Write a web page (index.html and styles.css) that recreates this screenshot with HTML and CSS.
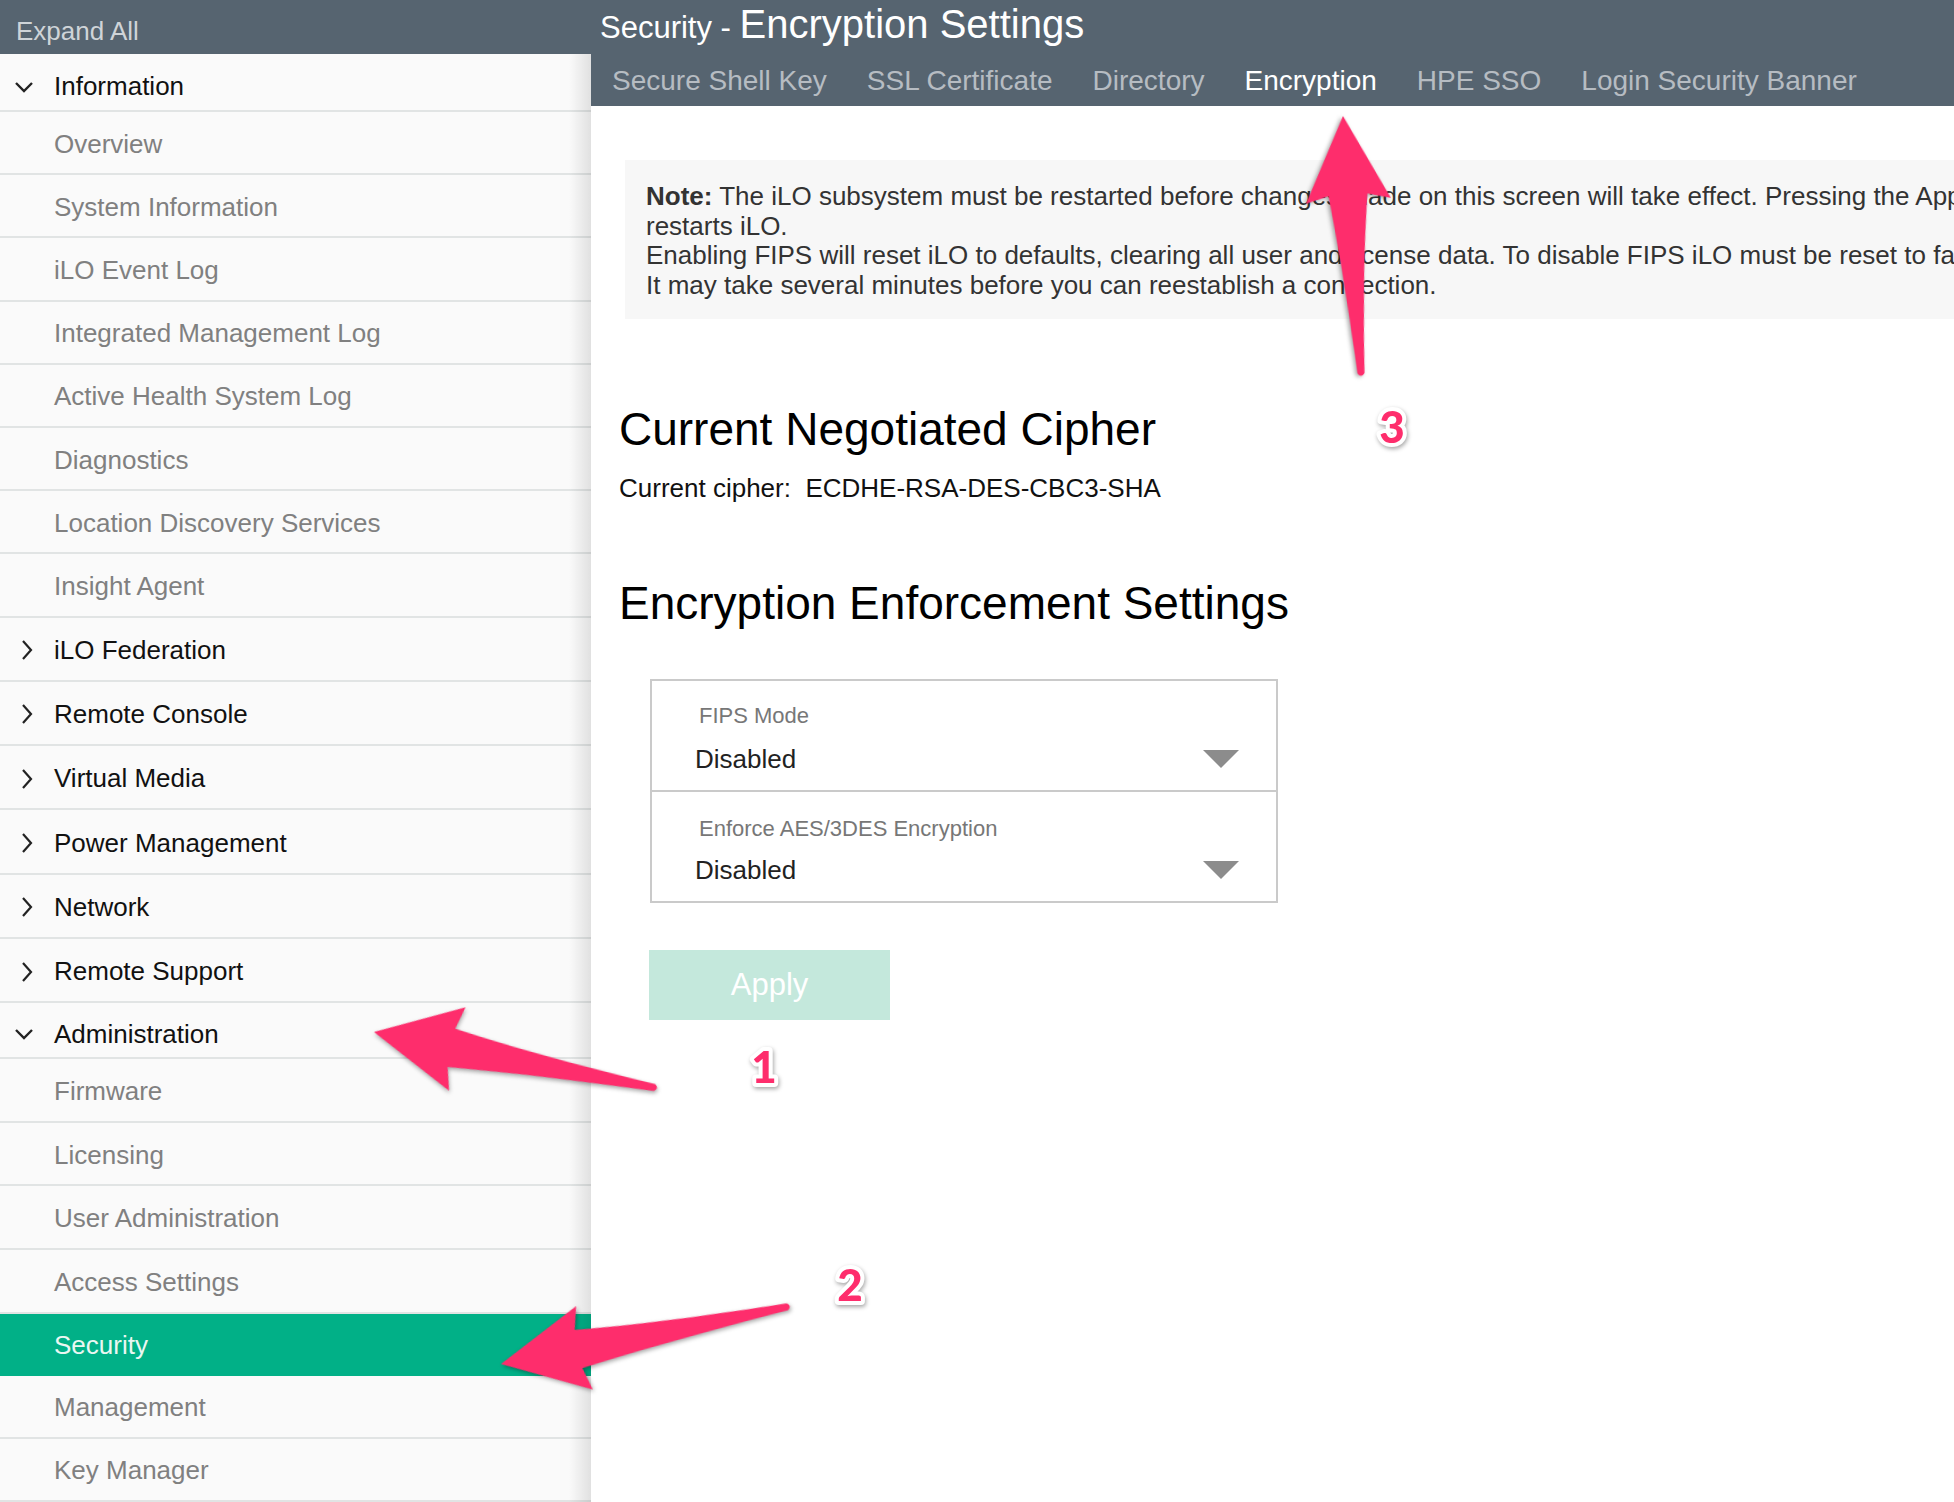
FILE: index.html
```html
<!DOCTYPE html>
<html lang="en">
<head>
<meta charset="utf-8">
<title>Security - Encryption Settings</title>
<link rel="stylesheet" href="styles.css">
</head>
<body>
<div class="page">
  <aside class="sidebar">
    <div class="expand">Expand All</div>
    <ul class="nav">
      <li class="item grp grp-open"><span class="chev"><svg width="20" height="12" viewBox="0 0 20 12"><polyline points="2,2 10,10 18,2" fill="none" stroke="#222" stroke-width="2.4"/></svg></span>Information</li>
      <li class="item sub">Overview</li>
      <li class="item sub">System Information</li>
      <li class="item sub">iLO Event Log</li>
      <li class="item sub">Integrated Management Log</li>
      <li class="item sub">Active Health System Log</li>
      <li class="item sub">Diagnostics</li>
      <li class="item sub">Location Discovery Services</li>
      <li class="item sub">Insight Agent</li>
      <li class="item grp grp-closed"><span class="chev"><svg width="12" height="22" viewBox="0 0 12 22"><polyline points="2,2 10,11 2,20" fill="none" stroke="#222" stroke-width="2.2"/></svg></span>iLO Federation</li>
      <li class="item grp grp-closed"><span class="chev"><svg width="12" height="22" viewBox="0 0 12 22"><polyline points="2,2 10,11 2,20" fill="none" stroke="#222" stroke-width="2.2"/></svg></span>Remote Console</li>
      <li class="item grp grp-closed"><span class="chev"><svg width="12" height="22" viewBox="0 0 12 22"><polyline points="2,2 10,11 2,20" fill="none" stroke="#222" stroke-width="2.2"/></svg></span>Virtual Media</li>
      <li class="item grp grp-closed"><span class="chev"><svg width="12" height="22" viewBox="0 0 12 22"><polyline points="2,2 10,11 2,20" fill="none" stroke="#222" stroke-width="2.2"/></svg></span>Power Management</li>
      <li class="item grp grp-closed"><span class="chev"><svg width="12" height="22" viewBox="0 0 12 22"><polyline points="2,2 10,11 2,20" fill="none" stroke="#222" stroke-width="2.2"/></svg></span>Network</li>
      <li class="item grp grp-closed"><span class="chev"><svg width="12" height="22" viewBox="0 0 12 22"><polyline points="2,2 10,11 2,20" fill="none" stroke="#222" stroke-width="2.2"/></svg></span>Remote Support</li>
      <li class="item grp grp-open grp-admin"><span class="chev"><svg width="20" height="12" viewBox="0 0 20 12"><polyline points="2,2 10,10 18,2" fill="none" stroke="#222" stroke-width="2.4"/></svg></span>Administration</li>
      <li class="item sub sub-admin">Firmware</li>
      <li class="item sub sub-admin">Licensing</li>
      <li class="item sub sub-admin">User Administration</li>
      <li class="item sub sub-admin">Access Settings</li>
      <li class="item sub sub-active">Security</li>
      <li class="item sub">Management</li>
      <li class="item sub">Key Manager</li>
    </ul>
  </aside>

  <main class="main">
    <header class="topbar">
      <div class="title"><span class="title-sec">Security -&nbsp;</span><span class="title-page">Encryption Settings</span></div>
      <nav class="tabs">
        <span class="tab">Secure Shell Key</span>
        <span class="tab">SSL Certificate</span>
        <span class="tab">Directory</span>
        <span class="tab tab-active">Encryption</span>
        <span class="tab">HPE SSO</span>
        <span class="tab">Login Security Banner</span>
      </nav>
    </header>

    <section class="content">
      <div class="note">
        <b>Note:</b> The iLO subsystem must be restarted before changes made on this screen will take effect. Pressing the Apply button<br>
        restarts iLO.<br>
        Enabling FIPS will reset iLO to defaults, clearing all user and license data. To disable FIPS iLO must be reset to factory defaults.<br>
        It may take several minutes before you can reestablish a connection.
      </div>

      <h2 class="heading heading-first">Current Negotiated Cipher</h2>
      <p class="cipher">Current cipher:&nbsp; ECDHE-RSA-DES-CBC3-SHA</p>

      <h2 class="heading heading-second">Encryption Enforcement Settings</h2>

      <div class="selects">
        <div class="sel-row">
          <div class="sel-label">FIPS Mode</div>
          <div class="sel-value"><span>Disabled</span><svg class="caret" width="38" height="20" viewBox="0 0 38 20"><polygon points="1,1 37,1 19,19" fill="#8c8c8c"/></svg></div>
        </div>
        <div class="sel-row sel-row-second">
          <div class="sel-label">Enforce AES/3DES Encryption</div>
          <div class="sel-value"><span>Disabled</span><svg class="caret" width="38" height="20" viewBox="0 0 38 20"><polygon points="1,1 37,1 19,19" fill="#8c8c8c"/></svg></div>
        </div>
      </div>

      <button class="apply" type="button">Apply</button>
    </section>
  </main>

  <svg class="annotations" width="1954" height="1502" viewBox="0 0 1954 1502">
    <g class="arrow" transform="translate(374,1032) rotate(11.2)">
      <path d="M0 0 L85 -42 L79 -19 Q160 -9 286 -3.5 Q291 0 286 3.5 Q160 11 79 20 L85 43 Z"/>
    </g>
    <g class="arrow" transform="translate(501,1364) rotate(-11.3)">
      <path d="M0 0 L85 -42 L79 -19 Q160 -9 292 -3.5 Q297 0 292 3.5 Q160 11 79 20 L85 43 Z"/>
    </g>
    <g class="arrow" transform="translate(1343,116) rotate(86)">
      <path d="M0 0 L85 -42 L79 -19 Q150 -9 258 -3.5 Q263 0 258 3.5 Q150 11 79 20 L85 43 Z"/>
    </g>
    <text class="badge" x="764" y="1083">1</text>
    <text class="badge" x="850" y="1301">2</text>
    <text class="badge" x="1392" y="443">3</text>
  </svg>
</div>
</body>
</html>
```

FILE: styles.css
```css
html, body {
  margin: 0;
  padding: 0;
  overflow: hidden;
  background: #ffffff;
  font-family: "Liberation Sans", Arial, Helvetica, sans-serif;
}

.page {
  position: relative;
  display: flex;
  width: 1954px;
  height: 1502px;
  overflow: hidden;
}

/* ---------- Sidebar ---------- */
.sidebar {
  position: relative;
  flex: none;
  width: 591px;
  background: #fafafa;
}

.sidebar::after {
  content: "";
  position: absolute;
  top: 54px;
  right: 0;
  bottom: 0;
  width: 22px;
  background: linear-gradient(to right, rgba(0, 0, 0, 0), rgba(0, 0, 0, 0.10));
}

.expand {
  box-sizing: border-box;
  height: 54px;
  padding: 8px 0 0 16px;
  display: flex;
  align-items: center;
  background: #566470;
  color: #cfd4d8;
  font-size: 26px;
}

.nav {
  list-style: none;
  margin: 0;
  padding: 0;
}

.item {
  box-sizing: border-box;
  display: flex;
  align-items: center;
  padding-left: 54px;
  padding-top: 3px;
  border-bottom: 2px solid #e1e4e4;
  font-size: 26px;
  white-space: nowrap;
}

.grp {
  color: #111111;
  padding-left: 0;
}

.chev {
  width: 54px;
  flex: none;
  display: flex;
  align-items: center;
}

.grp-open .chev {
  padding-left: 14px;
  box-sizing: border-box;
}

.grp-closed .chev {
  padding-left: 21px;
  box-sizing: border-box;
}

.grp-open {
  height: 58px;
  padding-top: 9px;
}

.grp-admin {
  height: 56px;
  padding-top: 8px;
}

.grp-closed {
  height: 64.3px;
}

.sub {
  height: 63.2px;
  color: #808080;
}

.sub-admin {
  height: 63.6px;
}

.sub-active {
  height: 62px;
  background: #01b087;
  color: #eaf7f2;
  border-bottom-color: #01b087;
}

/* ---------- Main ---------- */
.main {
  flex: 1;
  min-width: 0;
  background: #ffffff;
}

.topbar {
  height: 106px;
  background: #566470;
}

.title {
  height: 50px;
  padding-left: 9px;
  display: flex;
  align-items: baseline;
  line-height: 48px;
  color: #ffffff;
  white-space: nowrap;
}

.title-sec {
  font-size: 31px;
}

.title-page {
  font-size: 40px;
}

.tabs {
  box-sizing: border-box;
  height: 56px;
  padding: 6px 0 0 21px;
  display: flex;
  align-items: center;
  gap: 40px;
  white-space: nowrap;
}

.tab {
  font-size: 28px;
  color: #b6bcc2;
}

.tab-active {
  color: #ffffff;
}

.content {
  padding-left: 28px;
}

.note {
  box-sizing: border-box;
  width: 1500px;
  margin: 54px 0 0 6px;
  padding: 22px 0 18px 21px;
  background: #f7f7f7;
  color: #333333;
  font-size: 26px;
  line-height: 29.7px;
  white-space: nowrap;
}

.note b {
  font-weight: bold;
}

.heading {
  margin: 0;
  font-size: 46px;
  font-weight: normal;
  line-height: 53px;
  color: #000000;
  white-space: nowrap;
}

.heading-first {
  margin-top: 84px;
}

.cipher {
  margin: 17px 0 0 0;
  font-size: 26px;
  line-height: 30px;
  color: #111111;
}

.heading-second {
  margin-top: 74px;
}

.selects {
  width: 628px;
  box-sizing: border-box;
  margin: 49px 0 0 31px;
  border: 2px solid #cacaca;
}

.sel-row {
  height: 109px;
  box-sizing: border-box;
  padding: 22px 36px 0 43px;
}

.sel-row-second {
  height: 111px;
  padding-top: 24px;
  border-top: 2px solid #cacaca;
}

.sel-label {
  padding-left: 4px;
  font-size: 22px;
  line-height: 26px;
  color: #777777;
}

.sel-value {
  margin-top: 15px;
  display: flex;
  align-items: center;
  justify-content: space-between;
  font-size: 26px;
  line-height: 30px;
  color: #222222;
}

.sel-row-second .sel-value {
  margin-top: 13px;
}

.caret {
  display: block;
}

.apply {
  display: block;
  width: 241px;
  height: 70px;
  margin: 47px 0 0 30px;
  border: none;
  background: #c4e8dc;
  color: #ffffff;
  font-family: "Liberation Sans", Arial, Helvetica, sans-serif;
  font-size: 31px;
}

/* ---------- Annotations ---------- */
.annotations {
  position: absolute;
  left: 0;
  top: 0;
  pointer-events: none;
}

.arrow path {
  fill: #fe2d6c;
  filter: drop-shadow(1px 2px 2px rgba(0, 0, 0, 0.35));
}

.badge {
  font-family: "Lato", "Liberation Sans", Arial, sans-serif;
  font-weight: 900;
  font-size: 44px;
  text-anchor: middle;
  fill: #fe2d6c;
  stroke: #ffffff;
  stroke-width: 8px;
  stroke-linejoin: round;
  paint-order: stroke;
  filter: drop-shadow(1px 2px 2px rgba(0, 0, 0, 0.35));
}
```
